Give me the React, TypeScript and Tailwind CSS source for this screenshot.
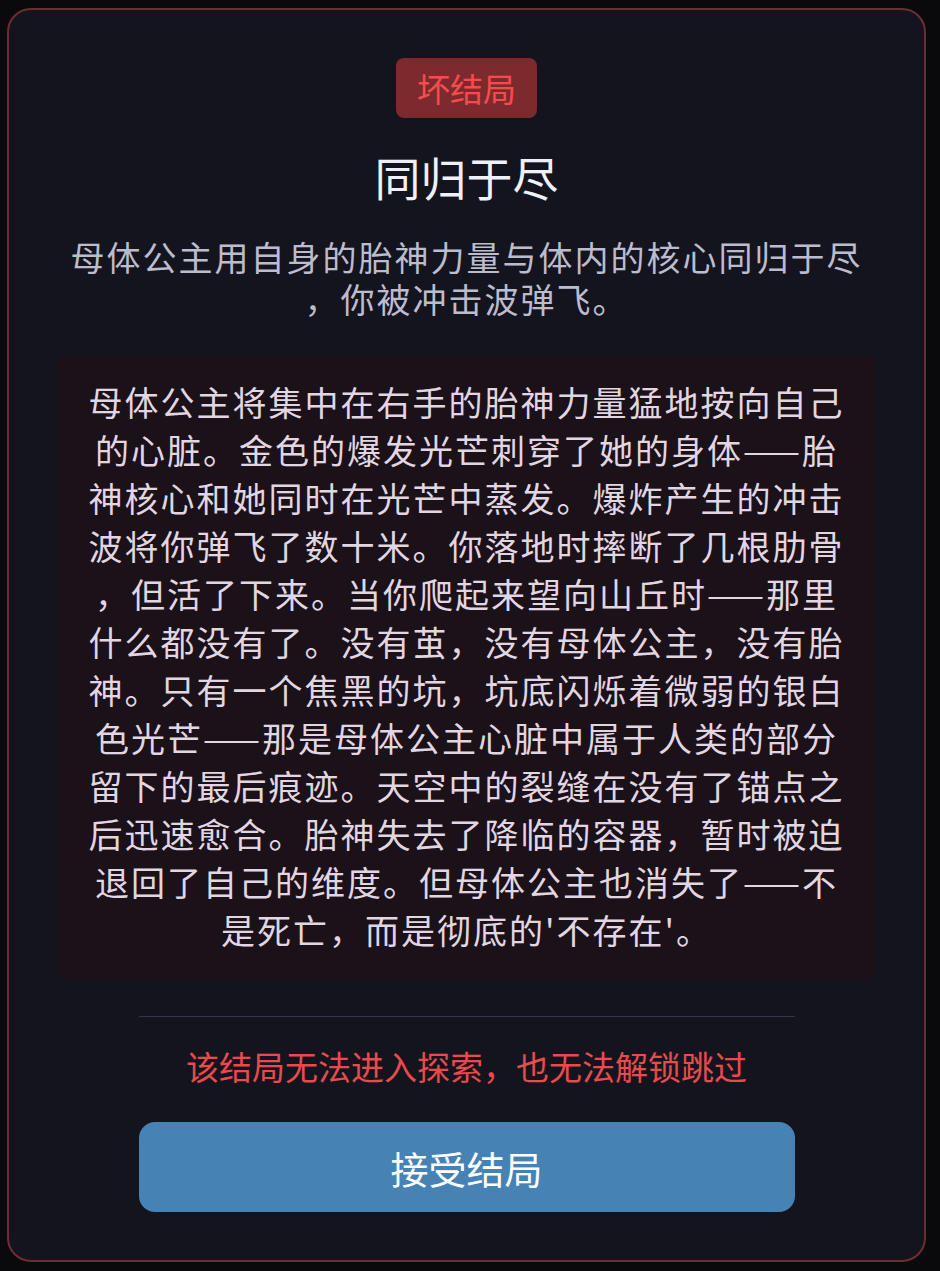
const story =
  "母体公主将集中在右手的胎神力量猛地按向自己的心脏。金色的爆发光芒刺穿了她的身体——胎神核心和她同时在光芒中蒸发。爆炸产生的冲击波将你弹飞了数十米。你落地时摔断了几根肋骨，但活了下来。当你爬起来望向山丘时——那里什么都没有了。没有茧，没有母体公主，没有胎神。只有一个焦黑的坑，坑底闪烁着微弱的银白色光芒——那是母体公主心脏中属于人类的部分留下的最后痕迹。天空中的裂缝在没有了锚点之后迅速愈合。胎神失去了降临的容器，暂时被迫退回了自己的维度。但母体公主也消失了——不是死亡，而是彻底的'不存在'。";

// Ending dialog shown when the player lands on a bad ending
function EndingModal() {
  return (
    <div className="w-[919px] rounded-3xl border-2 border-[#6f2c33] bg-[#14141f] px-12 pt-12 pb-12 flex flex-col items-center">
      <span className="h-[60px] px-[21px] rounded-lg bg-[#7d2a2f] text-[#f44c4c] text-[33px] leading-[60px]">
        坏结局
      </span>

      <h2 className="mt-[30px] text-[46px] leading-[56px] text-[#f0f0f8] font-normal">同归于尽</h2>

      <p className="mt-8 w-full text-center text-[34px] tracking-[2px] leading-[42px] text-[#bcbccd] [line-break:anywhere]">
        母体公主用自身的胎神力量与体内的核心同归于尽，你被冲击波弹飞。
      </p>

      <div className="mt-[35px] w-full rounded-lg bg-[#1b1118] px-[30px] pt-[23px] pb-[26px]">
        <p className="text-center text-[34px] tracking-[2px] leading-[48px] text-[#e2d6e2] [line-break:anywhere]">
          {story}
        </p>
      </div>

      <div className="mt-9 h-px w-[656px] bg-[#33334a]" />

      <p className="mt-[27px] text-[33px] leading-[44px] text-[#e94a4c]">该结局无法进入探索，也无法解锁跳过</p>

      <button className="mt-[34px] h-[90px] w-[656px] rounded-2xl bg-[#4682b4] text-[38px] text-white">
        接受结局
      </button>
    </div>
  );
}

export default function App() {
  return (
    <div
      className="min-h-screen bg-[#0a0a0d] pl-[7px] pt-2 pb-2"
      style={{ fontFamily: '"Noto Sans CJK SC", "Noto Sans", sans-serif' }}
    >
      <EndingModal />
    </div>
  );
}
